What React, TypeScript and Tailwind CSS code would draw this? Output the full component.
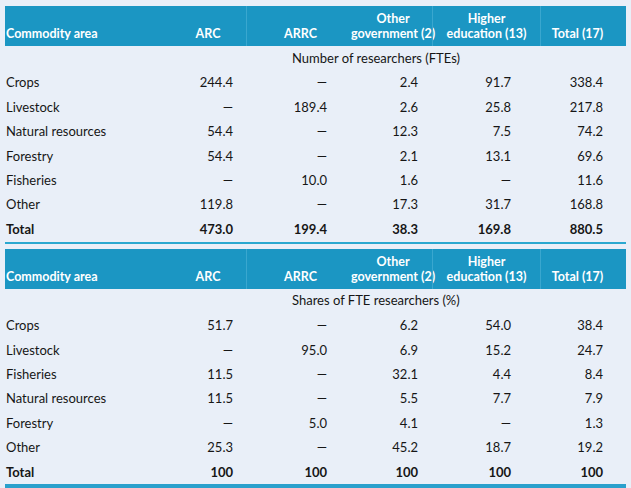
const FONT = "font-['Lato','Liberation_Sans',sans-serif]";

type Row = { label: string; values: string[]; bold?: boolean };

const table1: Row[] = [
  { label: "Crops", values: ["244.4", "—", "2.4", "91.7", "338.4"] },
  { label: "Livestock", values: ["—", "189.4", "2.6", "25.8", "217.8"] },
  { label: "Natural resources", values: ["54.4", "—", "12.3", "7.5", "74.2"] },
  { label: "Forestry", values: ["54.4", "—", "2.1", "13.1", "69.6"] },
  { label: "Fisheries", values: ["—", "10.0", "1.6", "—", "11.6"] },
  { label: "Other", values: ["119.8", "—", "17.3", "31.7", "168.8"] },
  { label: "Total", values: ["473.0", "199.4", "38.3", "169.8", "880.5"], bold: true },
];

const table2: Row[] = [
  { label: "Crops", values: ["51.7", "—", "6.2", "54.0", "38.4"] },
  { label: "Livestock", values: ["—", "95.0", "6.9", "15.2", "24.7"] },
  { label: "Fisheries", values: ["11.5", "—", "32.1", "4.4", "8.4"] },
  { label: "Natural resources", values: ["11.5", "—", "5.5", "7.7", "7.9"] },
  { label: "Forestry", values: ["—", "5.0", "4.1", "—", "1.3"] },
  { label: "Other", values: ["25.3", "—", "45.2", "18.7", "19.2"] },
  { label: "Total", values: ["100", "100", "100", "100", "100"], bold: true },
];

const cols = "grid grid-cols-[165px_76px_108px_78px_108px_86px]";
const pads = ["pr-[13px]", "pr-[27px]", "pr-[14px]", "pr-[29px]", "pr-[23px]"];

function Header() {
  return (
    <div className={`${cols} h-[40px] bg-[#1b96c3] text-white font-bold text-[12.5px] leading-[15px]`}>
      <div className="flex items-end pb-[5px] pl-px">Commodity area</div>
      <div className="flex items-end justify-center pb-[5px]">ARC</div>
      <div className="flex items-end justify-center pb-[5px] border-l border-[#3aa7cf]">ARRC</div>
      <div className="flex flex-col items-center justify-end pb-[5px] text-center">
        <span>Other</span>
        <span className="whitespace-nowrap">government (2)</span>
      </div>
      <div className="flex flex-col items-center justify-end pb-[5px] text-center border-l border-[#3aa7cf]">
        <span>Higher</span>
        <span className="whitespace-nowrap">education (13)</span>
      </div>
      <div className="flex items-end justify-center pb-[5px] pr-3 border-l border-[#3aa7cf]">Total (17)</div>
    </div>
  );
}

function Table({ caption, rows, line }: { caption: string; rows: Row[]; line: string }) {
  return (
    <div>
      <Header />
      <div className="h-[25px] flex items-center pl-[287px] text-[13px] text-[#161616]">{caption}</div>
      {rows.map((r) => (
        <div
          key={r.label}
          className={`${cols} h-[24.4px] items-center text-[13px] text-[#161616] ${r.bold ? "font-bold" : ""}`}
        >
          <div className="pl-px">{r.label}</div>
          {r.values.map((v, i) => (
            <div key={i} className={`text-right ${pads[i]}`}>
              {v}
            </div>
          ))}
        </div>
      ))}
      <div className={line} />
    </div>
  );
}

export default function App() {
  return (
    <div className={`w-[631px] h-[488px] bg-[#e9eff8] pt-[6px] pl-[5px] pr-[5px] overflow-hidden ${FONT}`}>
      <Table caption="Number of researchers (FTEs)" rows={table1} line="h-[2px] bg-[#2aa8d0]" />
      <div className="h-[5px]" />
      <Table caption="Shares of FTE researchers (%)" rows={table2} line="h-[4px] bg-[#2aa0cc]" />
    </div>
  );
}
